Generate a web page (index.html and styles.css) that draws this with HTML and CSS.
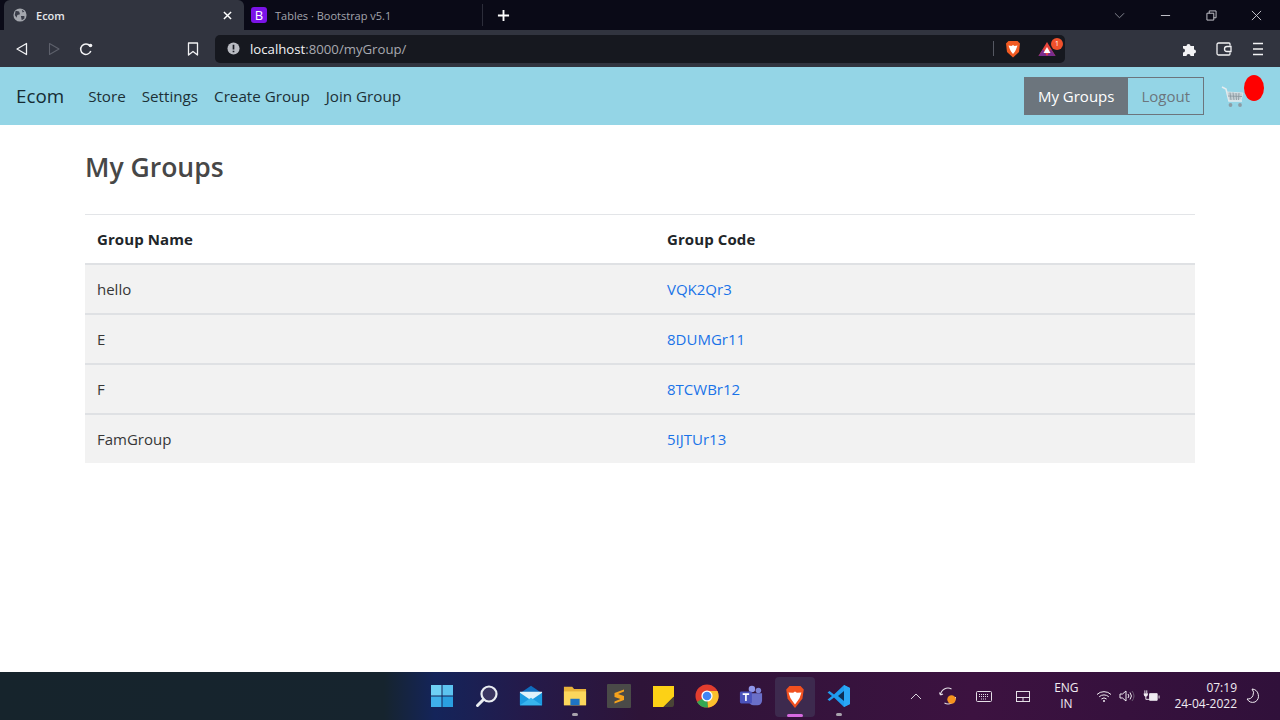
FILE: index.html
```html
<!DOCTYPE html>
<html lang="en">
<head>
<meta charset="utf-8">
<title>Ecom</title>
<link rel="stylesheet" href="styles.css">
</head>
<body>
<div class="browser">
  <div class="tabstrip">
    <div class="tab active">
      <svg class="favicon" viewBox="0 0 16 16"><circle cx="8" cy="8" r="7.500" fill="#a4a7ae"/><path d="M3 3l4 1 1 3-3 1-1 3-2-3zM9 9l4 0 0 3-3 2z M10 2l3 2-2 1z" fill="#3a3d49"/></svg>
      <span class="tab-title">Ecom</span>
      <svg class="tab-close" viewBox="0 0 10 10"><path d="M1 1l8 8M9 1l-8 8" stroke="#fff" stroke-width="1.600"/></svg>
    </div>
    <div class="tab other">
      <span class="bs-icon">B</span>
      <span class="tab-title2">Tables · Bootstrap v5.1</span>
    </div>
    <div class="tab-sep"></div>
    <svg class="newtab" viewBox="0 0 14 14"><path d="M7 1v12M1 7h12" stroke="#fff" stroke-width="2"/></svg>
    <div class="spacer"></div>
    <div class="winctl">
      <svg viewBox="0 0 12 12" class="w-chev"><path d="M1 3.500l5 5 5-5" fill="none" stroke="#8d8f99" stroke-width="1"/></svg>
      <svg viewBox="0 0 12 12" class="w-min"><path d="M1 6h10" stroke="#d0d0d6" stroke-width="1"/></svg>
      <svg viewBox="0 0 12 12" class="w-max"><path d="M1 3.500h7.500v7.500h-7.500z M3.500 3.500v-2.500h7.500v7.500h-2.500" fill="none" stroke="#d0d0d6" stroke-width="1"/></svg>
      <svg viewBox="0 0 12 12" class="w-close"><path d="M1 1l10 10M11 1l-10 10" stroke="#d0d0d6" stroke-width="1"/></svg>
    </div>
  </div>
  <div class="toolbar">
    <svg class="tb-icon back" viewBox="0 0 14 14"><path d="M11.500 1.500v11L2 7z" fill="none" stroke="#f2f2f4" stroke-width="1.300" stroke-linejoin="round"/></svg>
    <svg class="tb-icon fwd" viewBox="0 0 14 14"><path d="M2.500 1.500v11L12 7z" fill="none" stroke="#5d606b" stroke-width="1.100" stroke-linejoin="round"/></svg>
    <svg class="tb-icon reload" viewBox="0 0 14 14"><path d="M11.800 9a5.200 5.200 0 1 1-.8-5" fill="none" stroke="#f2f2f4" stroke-width="1.500"/><circle cx="11.500" cy="3.500" r="1.800" fill="#f2f2f4"/></svg>
    <svg class="tb-icon bookmark" viewBox="0 0 14 14"><path d="M2.500 1h9v12L7 9.500 2.500 13z" fill="none" stroke="#f2f2f4" stroke-width="1.300" stroke-linejoin="round"/></svg>
    <div class="urlbar">
      <svg class="info" viewBox="0 0 14 14"><circle cx="7" cy="7" r="6.500" fill="#b9bbc2"/><path d="M7 3v5M7 9.300v1.700" stroke="#1a1c24" stroke-width="1.800"/></svg>
      <span class="url"><span class="host">localhost</span>:8000/myGroup/</span>
      <div class="spacer"></div>
      <span class="url-sep"></span>
      <svg class="brave-small" viewBox="0 0 16 18"><path d="M3.500 1h9L15 3.500l-1 8.500-6 5.500L2 12 1 3.500z" fill="#f15a22"/><path d="M3.500 5.500l3 .5L8 5l1.500 1 3-.5-1.500 4-1 2L8 14l-2-2.500-1-2z" fill="#fff"/></svg>
      <span class="bat-wrap">
        <svg class="bat" viewBox="0 0 18 16"><path d="M9 1l8.500 14H.5z" fill="#e8453c"/><path d="M.5 15L5 8l4 7z M17.500 15L13 8l-4 7z" fill="#7a2c8e"/><path d="M9 6l3.500 6h-7z" fill="#fff"/></svg>
        <span class="bat-badge">1</span>
      </span>
    </div>
    <svg class="tb-icon puzzle" viewBox="0 0 16 16"><path d="M1 5h3.500a2 2 0 1 1 4 0H12v3.500a2 2 0 1 1 0 4V15H8.500a2 2 0 1 0-4 0H1v-3.500a2 2 0 1 0 0-4z" fill="#f2f2f4"/></svg>
    <svg class="tb-icon wallet" viewBox="0 0 16 14"><path d="M14 3.500V2a1 1 0 0 0-1-1H2.500A1.500 1.500 0 0 0 1 2.500v9A1.500 1.500 0 0 0 2.500 13H13a1 1 0 0 0 1-1v-1.500M15 4.500h-4a2.500 2.500 0 0 0 0 5h4z" fill="none" stroke="#f2f2f4" stroke-width="1.300"/></svg>
    <svg class="tb-icon menu" viewBox="0 0 12 14"><path d="M1 1.500h10M1 7h10M1 12.500h10" stroke="#f2f2f4" stroke-width="1.400"/></svg>
  </div>
</div>

<nav class="navbar">
  <a class="brand">Ecom</a>
  <ul class="navlinks">
    <li>Store</li>
    <li>Settings</li>
    <li>Create Group</li>
    <li>Join Group</li>
  </ul>
  <div class="spacer"></div>
  <div class="btngroup">
    <a class="btn solid">My Groups</a>
    <a class="btn outline">Logout</a>
  </div>
  <div class="cart">
    <svg class="cart-icon" viewBox="0 0 24 22"><path d="M1 1l4 2 3 12h13" fill="none" stroke="#e4ecef" stroke-width="1.600"/><path d="M6 6l16 1-2 7-12 .5z" fill="#c4cfd4" stroke="#dfe7ea" stroke-width=".8"/><path d="M9 6.500l1 7.500M12 6.500l1 7.500M15 7l.5 7M18 7l-.5 7M7 10l14 .5" stroke="#87969d" stroke-width=".8"/><circle cx="9.500" cy="19" r="1.900" fill="#8b9ca4"/><circle cx="19" cy="19" r="1.900" fill="#8b9ca4"/></svg>
    <span class="cart-badge"></span>
  </div>
</nav>

<main class="content">
  <h2 class="title">My Groups</h2>
  <table class="groups">
    <thead>
      <tr><th class="c1">Group Name</th><th>Group Code</th></tr>
    </thead>
    <tbody>
      <tr><td>hello</td><td><a>VQK2Qr3</a></td></tr>
      <tr><td>E</td><td><a>8DUMGr11</a></td></tr>
      <tr><td>F</td><td><a>8TCWBr12</a></td></tr>
      <tr><td>FamGroup</td><td><a>5IJTUr13</a></td></tr>
    </tbody>
  </table>
</main>

<footer class="taskbar">
  <div class="apps">
    <span class="app win"><svg viewBox="0 0 24 24"><path d="M1 1h10.500v10.500H1z" fill="#6fd0f5"/><path d="M12.500 1H23v10.500H12.500z" fill="#5cc3f0"/><path d="M1 12.500h10.500V23H1z" fill="#3fb0ea"/><path d="M12.500 12.500H23V23H12.500z" fill="#2a9fe0"/></svg></span>
    <span class="app"><svg viewBox="0 0 24 24"><circle cx="14" cy="10" r="7.500" fill="#3a3560" stroke="#e9edf2" stroke-width="2.200"/><path d="M8.500 15.500L2.500 21.500" stroke="#e9edf2" stroke-width="3" stroke-linecap="round"/></svg></span>
    <span class="app"><svg viewBox="0 0 26 24"><path d="M1 9L13 1l12 8v13H1z" fill="#0f6cbd"/><path d="M1 8.500h24V22H1z" fill="#1b9ae0"/><path d="M1 8.500l12 8 12-8v-1H1z" fill="#dff2fb"/><path d="M1 22l12-8 12 8z" fill="#38b4ee"/></svg></span>
    <span class="app running"><svg viewBox="0 0 26 24"><path d="M1 2h9l2 2.500h13V22H1z" fill="#e8b33a"/><path d="M1 7h24v15H1z" fill="#fcd75c"/><path d="M8 15h10v7H8z" fill="#1e74c4"/></svg></span>
    <span class="app"><svg viewBox="0 0 24 24"><rect width="24" height="24" rx="1" fill="#4a4a48"/><path d="M17 5.500L7.500 9v4l6 2-6 2.500v2L17 16v-4l-6-2 6-2.500z" fill="#f5a21c"/></svg></span>
    <span class="app note"><svg viewBox="0 0 22 22"><path d="M0 0h22v11L11 22H0z" fill="#fcd116"/><path d="M22 11v8a3 3 0 0 1-3 3h-8z" fill="#4a4436"/></svg></span>
    <span class="app"><svg viewBox="0 0 24 24"><circle cx="12" cy="12" r="11.500" fill="#e23d2e"/><path d="M12 12L2 18a11.500 11.500 0 0 0 11 5.500z" fill="#34a853"/><path d="M12 7h10.500a11.500 11.500 0 0 1-9.500 16.500z" fill="#fbc02d"/><circle cx="12" cy="12" r="5.600" fill="#fff"/><circle cx="12" cy="12" r="4.300" fill="#4285f4"/></svg></span>
    <span class="app"><svg viewBox="0 0 26 24"><circle cx="21" cy="6" r="3" fill="#7d83d6"/><circle cx="14" cy="4.500" r="3.500" fill="#9096ea"/><path d="M10 9h15v8a5 5 0 0 1-5 5h-3a6 6 0 0 1-7-6z" fill="#6a6fc9"/><rect x="1" y="7" width="13" height="13" rx="1.500" fill="#4b53bc"/><path d="M4 10h7M7.500 10v7.500" stroke="#fff" stroke-width="1.800"/></svg></span>
    <span class="app current"><svg viewBox="0 0 22 26"><path d="M5 1h12l3.500 4-1.500 10L11 25 3 15 1.500 5z" fill="#f1501f"/><path d="M4 8l5 .5L11 7l2 1.500 5-.5-2 6-2 3-3 4-3-4-2-3z" fill="#fff"/></svg></span>
    <span class="app running"><svg viewBox="0 0 24 24"><path d="M17 1l6 3v16l-6 3L7 13.500 2.500 17 .5 15.500 5 12 .5 8.500l2-1.500L7 10.500z" fill="#1f9cf0"/><path d="M17 7l-6 5 6 5z" fill="#0d2f55"/><path d="M17 1l6 3v16l-6 3z" fill="#2aa7f5"/></svg></span>
  </div>
  <div class="tray">
    <svg class="t-chev" viewBox="0 0 12 7"><path d="M1 6l5-5 5 5" fill="none" stroke="#d8d2dc" stroke-width="1"/></svg>
    <span class="t-sync"><svg viewBox="0 0 18 18"><path d="M1.500 8a7.500 7.500 0 0 1 11-6M1.500 8l-1-2.500M1.500 8l2.500-1M16.500 10a7.500 7.500 0 0 1-11 6" fill="none" stroke="#e4dfe6" stroke-width="1.100"/><circle cx="12.500" cy="12.500" r="4.200" fill="#f7931e"/></svg></span>
    <svg class="t-kbd" viewBox="0 0 16 11"><rect x=".5" y=".5" width="15" height="10" rx="1" fill="none" stroke="#e4dfe6"/><path d="M3 3.500h10M3 5.500h10M5 8h6" stroke="#e4dfe6" stroke-dasharray="1 1"/></svg>
    <svg class="t-pad" viewBox="0 0 14 11"><rect x=".5" y=".5" width="13" height="10" fill="none" stroke="#e4dfe6"/><path d="M.5 6.500h13M7 6.500v4" stroke="#e4dfe6"/></svg>
    <span class="t-lang">ENG<br>IN</span>
    <svg class="t-wifi" viewBox="0 0 16 12"><path d="M1 4.500a10 10 0 0 1 14 0M3.200 6.800a7 7 0 0 1 9.600 0M5.400 9a4 4 0 0 1 5.200 0" fill="none" stroke="#f0ecf2" stroke-width="1"/><circle cx="8" cy="11" r="1" fill="#f0ecf2"/></svg>
    <svg class="t-vol" viewBox="0 0 16 12"><path d="M1 4h2.500L7 1v10L3.500 8H1z" fill="none" stroke="#f0ecf2"/><path d="M9 4a3 3 0 0 1 0 4M11 2.500a5.500 5.500 0 0 1 0 7" fill="none" stroke="#f0ecf2"/><path d="M13 1a8 8 0 0 1 0 10" fill="none" stroke="#6b5b72"/></svg>
    <svg class="t-bat" viewBox="0 0 18 13"><path d="M7 3.500h8v7H7z" fill="#f0ecf2" stroke="#f0ecf2"/><path d="M16.500 5.500h1v3h-1z" fill="#f0ecf2"/><path d="M2 0v3M4 0v3M3 6v3.500h4" fill="none" stroke="#f0ecf2"/><path d="M.8 3h4.400v1.500a2.200 2.200 0 0 1-4.400 0z" fill="#f0ecf2"/></svg>
    <span class="t-clock"><span>07:19</span><span>24-04-2022</span></span>
    <svg class="t-moon" viewBox="0 0 14 16"><path d="M6 1a7 7 0 0 1 3 13 7 7 0 0 1-8-3 6 6 0 0 0 5-10z" fill="none" stroke="#f0ecf2" stroke-width="1"/></svg>
  </div>
</footer>
</body>
</html>
```
FILE: styles.css
```css
* { box-sizing: border-box; }
html, body { margin: 0; height: 100%; }
body {
  width: 1280px;
  height: 720px;
  overflow: hidden;
  display: flex;
  flex-direction: column;
  background: #fff;
  font-family: "Open Sans", "Noto Sans", sans-serif;
  color: #212529;
}
.spacer { flex: 1; }

/* browser chrome */
.tabstrip {
  height: 30px;
  background: #0a0a17;
  display: flex;
  align-items: center;
  padding-left: 4px;
}
.tab { height: 30px; display: flex; align-items: center; }
.tab.active {
  width: 240px;
  background: #31343f;
  border-radius: 6px 6px 0 0;
  padding: 0 12px 0 9px;
}
.favicon { width: 14px; height: 14px; }
.tab-title { margin-left: 9px; font-size: 11px; font-weight: 600; color: #e6e7ea; flex: 1; }
.tab-close { width: 9px; height: 9px; }
.tab.other { width: 238px; padding-left: 7px; }
.bs-icon {
  width: 16px; height: 16px;
  background: #7b13e8;
  border-radius: 3px;
  color: #fff;
  font-size: 13px;
  line-height: 16px;
  text-align: center;
}
.tab-title2 { margin-left: 8px; font-size: 11px; color: #a4a5ad; white-space: nowrap; }
.tab-sep { width: 1px; height: 22px; background: #2c2d3a; }
.newtab { width: 13px; height: 13px; margin-left: 14px; }
.winctl { display: flex; align-items: center; }
.winctl svg { width: 11px; height: 11px; }
.w-chev { margin-right: 35px; }
.w-min { margin-right: 35px; }
.w-max { margin-right: 34px; }
.w-close { margin-right: 18px; }

.toolbar {
  height: 37px;
  background: #31343f;
  display: flex;
  align-items: center;
}
.tb-icon { width: 14px; height: 14px; flex: none; }
.back { margin-left: 15px; }
.fwd { margin-left: 18px; }
.reload { margin-left: 18px; }
.bookmark { margin-left: 93px; }
.urlbar {
  width: 850px;
  height: 28px;
  margin-left: 15px;
  background: #16181f;
  border-radius: 5px;
  display: flex;
  align-items: center;
  padding-left: 12px;
}
.info { width: 13px; height: 13px; }
.url { margin-left: 10px; font-size: 13.2px; color: #a8a9b0; white-space: nowrap; }
.host { color: #f2f2f4; }
.url-sep { width: 1px; height: 15px; background: #555862; }
.brave-small { width: 16px; height: 18px; margin-left: 11px; }
.bat-wrap { position: relative; width: 18px; height: 16px; margin: 0 9px 0 17px; }
.bat { width: 18px; height: 16px; display: block; }
.bat-badge {
  position: absolute;
  top: -3px;
  right: -7px;
  width: 12px;
  height: 12px;
  border-radius: 50%;
  background: #f0512c;
  color: #fff;
  font-size: 7px;
  line-height: 12px;
  text-align: center;
}
.puzzle { margin-left: 117px; width: 16px; height: 16px; }
.wallet { margin-left: 18px; width: 16px; }
.menu { margin-left: 20px; width: 12px; }

/* navbar */
.navbar {
  height: 58px;
  background: #94d5e6;
  display: flex;
  align-items: center;
  padding: 0 16px;
}
.brand { font-size: 18.800px; color: #152b33; margin-right: 24px; }
.navlinks { display: flex; gap: 16px; list-style: none; margin: 0; padding: 0; font-size: 15.200px; line-height: 22px; color: #1c3036; }
.btngroup { display: flex; height: 38px; }
.btn {
  font-size: 15px;
  line-height: 36px;
  padding: 0 13px;
  border: 1px solid #6c757d;
}
.btn.solid { background: #6c757d; color: #fff; }
.btn.outline { color: #6c757d; border-left: 0; }
.cart { position: relative; width: 44px; height: 38px; margin-left: 16px; }
.cart-icon { position: absolute; left: 1px; top: 9px; width: 24px; height: 22px; }
.cart-badge {
  position: absolute;
  left: 24px;
  top: -2px;
  width: 20px;
  height: 26px;
  border-radius: 50%;
  background: #f00;
}

/* content */
.content { flex: 1; padding: 0 85px; }
.title { margin: 25px 0 30px; font-size: 26.500px; font-weight: 600; line-height: 34px; color: #474747; }
.groups { width: 100%; border-collapse: collapse; table-layout: fixed; font-size: 15px; }
.groups th, .groups td { text-align: left; padding: 0 12px; }
.groups th { height: 49px; letter-spacing: .1px; font-weight: 700; border-top: 1px solid #e3e5e8; border-bottom: 2px solid #dfe1e4; }
.groups .c1 { width: 570px; }
.groups td { height: 50px; border-bottom: 2px solid #dfe1e4; background: #f2f2f2; color: #373737; }
.groups tr:last-child td { border-bottom: 0; height: 49px; }
.groups a { color: #1a73e8; }

/* taskbar */
.taskbar {
  height: 48px;
  position: relative;
  background: linear-gradient(90deg, #16242c 0%, #16242e 30%, #14245a 34%, #241a4a 41%, #2e1438 50%, #3c1240 76%, #30103a 100%);
  display: flex;
  align-items: center;
}
.apps { position: absolute; left: 421px; top: 0; height: 48px; display: flex; }
.app { position: relative; width: 44px; height: 48px; display: flex; align-items: center; justify-content: center; }
.app svg { width: 24px; height: 24px; }
.app.win svg { margin-right: 2px; }
.app.note svg { width: 21px; height: 21px; }
.app.running::after, .app.current::after {
  content: "";
  position: absolute;
  bottom: 4px;
  left: 50%;
  transform: translateX(-50%);
  width: 6px;
  height: 3px;
  border-radius: 2px;
  background: #a9a3ad;
}
.app.current { width: 40px; margin: 5px 2px 0; height: 40px; background: #3d2a4e; border-radius: 4px; }
.app.current::after { width: 16px; background: #d66ae0; bottom: 0; }
.tray { margin-left: auto; display: flex; align-items: center; color: #f0ecf2; font-size: 12px; }
.tray svg { flex: none; }
.t-chev { width: 12px; height: 7px; margin-right: 17px; }
.t-sync { width: 18px; height: 18px; margin-right: 19px; }
.t-sync svg { width: 18px; height: 18px; display: block; }
.t-kbd { width: 16px; height: 11px; margin-right: 24px; }
.t-pad { width: 14px; height: 11px; margin-right: 21px; }
.t-lang { width: 30px; text-align: center; line-height: 16px; margin-right: 15px; }
.t-wifi { width: 16px; height: 12px; margin-right: 7px; }
.t-vol { width: 16px; height: 12px; margin-right: 8px; }
.t-bat { width: 17px; height: 13px; margin-right: 14px; }
.t-clock { display: flex; flex-direction: column; align-items: flex-end; line-height: 16px; margin-right: 9px; }
.t-moon { width: 14px; height: 16px; margin-right: 20px; }
```
